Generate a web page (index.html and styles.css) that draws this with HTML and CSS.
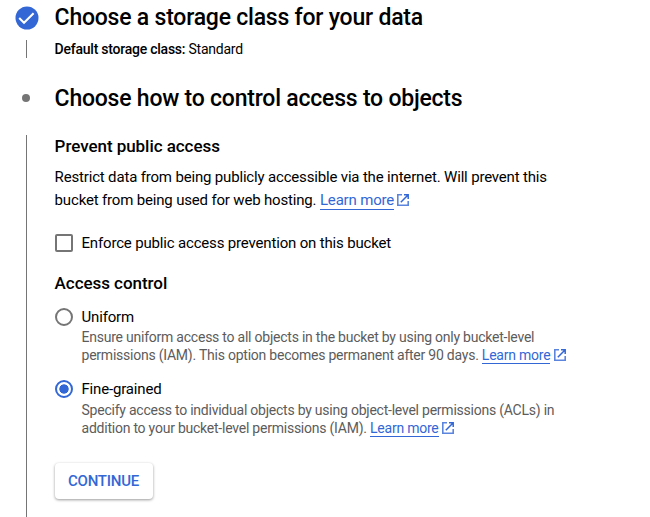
FILE: index.html
```html
<!DOCTYPE html>
<html lang="en">
<head>
<meta charset="utf-8">
<title>Create a bucket</title>
<link rel="stylesheet" href="styles.css">
</head>
<body>
<svg class="defs" width="0" height="0"><symbol id="ext" viewBox="0 0 12 12"><path d="M5 .8H.8v10.4h10.4V7" fill="none" stroke="currentColor" stroke-width="1.6" opacity=".8"/><path d="M7 .8h4.2V5M11 1 3.8 8.2" fill="none" stroke="currentColor" stroke-width="1.5"/></symbol></svg>
<main class="stepper">
  <section class="step step-done">
    <div class="rail"><svg class="check" viewBox="0 0 24 24"><circle cx="12" cy="12" r="11.5" fill="#3367d6"/><path d="m4.2 12 4.8 4.8 9.6-9.6" fill="none" stroke="#fff" stroke-width="2"/></svg><span class="line"></span></div>
    <div class="body">
      <h2>Choose a storage class for your data</h2>
      <p class="summary"><b>Default storage class:</b> Standard</p>
    </div>
  </section>
  <section class="step step-active">
    <div class="rail"><span class="dot"></span><span class="line"></span></div>
    <div class="body">
      <h2>Choose how to control access to objects</h2>
      <h3>Prevent public access</h3>
      <p class="text">Restrict data from being publicly accessible via the internet. Will prevent this<br>bucket from being used for web hosting. <a>Learn more</a><svg class="ext"><use href="#ext"/></svg></p>
      <label class="option check-option"><span class="box"></span><span class="name">Enforce public access prevention on this bucket</span></label>
      <h3 class="access">Access control</h3>
      <label class="option"><span class="radio"></span><span class="name">Uniform</span></label>
      <p class="help">Ensure uniform access to all objects in the bucket by using only bucket-level<br>permissions (IAM). This option becomes permanent after 90 days. <a>Learn more</a><svg class="ext"><use href="#ext"/></svg></p>
      <label class="option second"><span class="radio on"></span><span class="name">Fine-grained</span></label>
      <p class="help last">Specify access to individual objects by using object-level permissions (ACLs) in<br>addition to your bucket-level permissions (IAM). <a>Learn more</a><svg class="ext"><use href="#ext"/></svg></p>
      <button>CONTINUE</button>
    </div>
  </section>
</main>
</body>
</html>
```
FILE: styles.css
```css
* { box-sizing: border-box; }
body { margin: 0; background: #fff; color: #000; font-family: Roboto, sans-serif; height: 517px; overflow: hidden; }
h2, h3, p { margin: 0; }
.defs { display: block; }
.step { display: flex; }
.step-done { height: 81px; }
.step-active { height: 436px; }
.rail { width: 55px; flex: none; display: flex; flex-direction: column; align-items: center; padding-right: 2px; }
.check { width: 24px; height: 24px; margin: 6px 0 0 1px; }
.line { width: 1px; background: #757575; }
.step-done .line { height: 18px; margin-top: 10px; }
.dot { width: 8px; height: 8px; border-radius: 50%; background: #757575; margin: 13px 1px 0 0; }
.step-active .line { flex: 1; margin-top: 33px; }
.body { white-space: nowrap; }
h2 { font-size: 23px; line-height: 36px; height: 34px; font-weight: 500; letter-spacing: -0.22px; margin-left: -0.4px; }
h3 { font-size: 17px; line-height: 24px; font-weight: 500; margin: 19px 0 0 -0.4px; letter-spacing: -0.05px; }
.summary { font-size: 14px; line-height: 20px; margin: 5px 0 0 -0.4px; letter-spacing: -0.24px; }
.summary b { font-weight: 500; }
.text { font-size: 15px; line-height: 23px; margin: 8px 0 0 -0.4px; letter-spacing: -0.172px; }
a { color: #3367d6; border-bottom: 1px solid #3367d6; }
.ext { width: 12px; height: 12px; margin-left: 3.2px; color: #3367d6; vertical-align: -1px; overflow: visible; }
.option { display: flex; align-items: center; height: 20px; gap: 8.5px; font-size: 15px; letter-spacing: -0.17px; }
.check-option { margin-top: 21px; }
.box { width: 18px; height: 18px; border: 2px solid #757575; border-radius: 2px; }
h3.access { margin: 18px 0 12px -0.4px; }
.radio { width: 18px; height: 18px; border: 2px solid #757575; border-radius: 50%; }
.on { border-color: #3367d6; background: radial-gradient(circle, #3367d6 4.3px, transparent 5px); }
.help { font-size: 14px; line-height: 18px; color: #5c5c5c; margin: 1px 0 0 26.5px; letter-spacing: -0.232px; }
.help.last { margin-top: 2px; }
.second { margin-top: 15px; }
button { display: block; margin-top: 26px; width: 98px; height: 36px; border: 0; border-radius: 4px; background: #fff; box-shadow: 0 1px 3px rgba(0,0,0,.4); color: #3367d6; font: 500 15px Roboto, sans-serif; letter-spacing: -0.25px; padding: 0 1px 0 0; }
```
